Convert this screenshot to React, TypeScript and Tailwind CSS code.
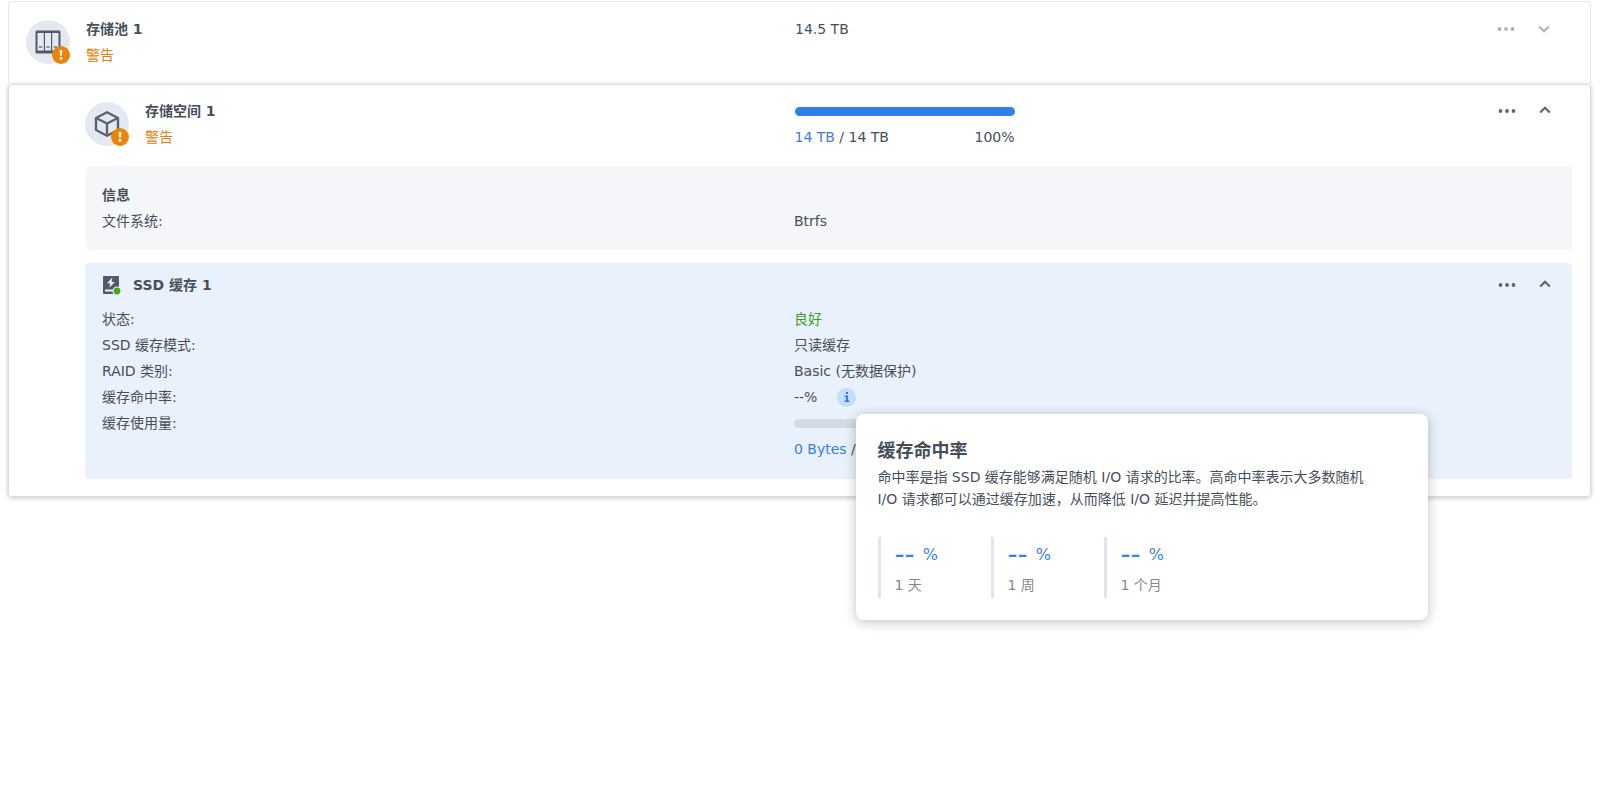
import React from 'react';

const cacheInfo = [
  { label: '状态:', value: '良好', className: 'text-[#3f9c1f]' },
  { label: 'SSD 缓存模式:', value: '只读缓存', className: '' },
  { label: 'RAID 类别:', value: 'Basic (无数据保护)', className: '' },
];

const hitRates = [
  { value: '--', label: '1 天' },
  { value: '--', label: '1 周' },
  { value: '--', label: '1 个月' },
];

const WarningBadge: React.FC = () => (
  <svg viewBox="0 0 18 18" className="absolute right-0 bottom-0 h-[18px] w-[18px]">
    <circle cx="9" cy="9" r="9" fill="#eb840b" />
    <path d="M7.6 4h2.8l-.5 5.8H8.1z" fill="#fff" />
    <circle cx="9" cy="12.3" r="1.4" fill="#fff" />
  </svg>
);

const PoolIcon: React.FC = () => (
  <svg viewBox="0 0 26 24" className="h-6 w-[26px]">
    <rect x="0.5" y="0.5" width="25" height="23" rx="1.5" fill="#505a68" />
    <path d="M2.5 3h6.3v17.5H2.5zM10 3h6v17.5h-6zM17.2 3h6.3v17.5h-6.3z" fill="#e4e9f1" />
    <path d="M4 17h3.2M11.4 17h3.2M18.8 17H22" stroke="#6b7481" strokeWidth="1.6" />
  </svg>
);

const VolumeIcon: React.FC = () => (
  <svg viewBox="0 0 26 26" className="h-[26px] w-[26px]" fill="none" stroke="#5a6370" strokeWidth="2.4" strokeLinejoin="round">
    <path d="M13 1.3 24 7v12l-11 5.7L2 19V7z" />
    <path d="M2 7l11 5.5L24 7M13 12.5v12" />
  </svg>
);

const CacheIcon: React.FC = () => (
  <svg viewBox="0 0 20 20" className="h-5 w-5">
    <path d="M2 1h14a1 1 0 0 1 1 1v16a1 1 0 0 1-1 1H2a1 1 0 0 1-1-1V2a1 1 0 0 1 1-1z" fill="#505a68" />
    <path d="M3 14.5h8.5v2H3z" fill="#e8f0fd" />
    <path d="M10.2 2.8 5 8.2h3.2l-.8 4.2L13 7H9.7z" fill="#e8f0fd" />
    <circle cx="15" cy="16" r="4.6" fill="#e8f0fd" />
    <circle cx="15" cy="16" r="3.4" fill="#43a816" />
  </svg>
);

const RowActions: React.FC<{ name: string; open?: boolean }> = ({ name, open }) => (
  <div className={`flex h-[26px] shrink-0 items-center gap-5 ${open ? 'text-[#5f6670]' : 'text-[#adb0b5]'}`}>
    <button type="button" aria-label={`${name} 更多`}>
      <svg viewBox="0 0 18 18" className="h-[18px] w-[18px]" fill="currentColor">
        <circle cx="2.5" cy="9" r="1.9" />
        <circle cx="9" cy="9" r="1.9" />
        <circle cx="15.5" cy="9" r="1.9" />
      </svg>
    </button>
    <button type="button" aria-label={`${name} 展开`} aria-expanded={!!open}>
      <svg viewBox="0 0 18 18" className="h-[18px] w-[18px]" fill="none" stroke="currentColor" strokeWidth="2.2">
        <path d={open ? 'M4.2 10.5 9 5.800l4.8 4.7' : 'M4.2 6.5 9 11.200l4.800-4.700'} />
      </svg>
    </button>
  </div>
);

const HitRatePopover: React.FC = () => (
  <div
    role="tooltip"
    className="absolute top-full left-full z-10 mt-[7px] w-[572px] rounded-lg bg-white px-[21px] pt-6 pb-[22px] shadow-[0_2px_12px_rgba(0,0,0,0.25)]"
  >
    <h3 className="text-lg leading-[26px] font-bold">缓存命中率</h3>
    <p className="mt-0.5 pr-6 leading-[22px]">
      命中率是指 SSD 缓存能够满足随机 I/O 请求的比率。高命中率表示大多数随机 I/O 请求都可以通过缓存加速，从而降低 I/O 延迟并提高性能。
    </p>
    <div className="mt-[27px] ml-px flex">
      {hitRates.map((rate) => (
        <div key={rate.label} className="w-[113px] border-l-3 border-[#dde5ef] pl-[13px]">
          <p className="flex h-9 items-center gap-2 text-base text-[#3b82e0]">
            <span className="text-[28px] leading-9">{rate.value}</span>%
          </p>
          <p className="leading-[25px] text-[#84898f]">{rate.label}</p>
        </div>
      ))}
    </div>
  </div>
);

const App: React.FC = () => {
  return (
    <main className="min-h-screen bg-white pt-px pr-[21px] pl-2 font-['DejaVu_Sans','Noto_Sans_CJK_SC',sans-serif] text-sm text-[#464f59]">
      {/* Storage pool */}
      <section className="flex h-[83px] rounded-t border border-b-0 border-[#e8e9eb] pt-[14px] pr-[37px]">
        <div className="flex w-[calc(50%+14px)] shrink-0 gap-4 pl-[17px]">
          <div className="relative mt-1 flex h-11 w-11 items-center justify-center rounded-full bg-[#e4e9f1]">
            <PoolIcon />
            <WarningBadge />
          </div>
          <div className="leading-[26px]">
            <h2 className="font-bold">存储池 1</h2>
            <p className="text-[#e3830f]">警告</p>
          </div>
        </div>
        <div className="flex-1 leading-[26px]">14.5 TB</div>
        <RowActions name="存储池 1" />
      </section>

      {/* Volume */}
      <section className="rounded border border-[#dcdde0] pt-[13px] pr-[18px] pb-[17px] pl-[76px] shadow-[0_1px_4px_rgba(0,0,0,0.25)]">
        <div className="flex pr-[18px]">
          <div className="flex w-[calc(50%-25px)] shrink-0 gap-4">
            <div className="relative mt-1 flex h-11 w-11 items-center justify-center rounded-full bg-[#e4e9f1]">
              <VolumeIcon />
              <WarningBadge />
            </div>
            <div className="leading-[26px]">
              <h2 className="font-bold">存储空间 1</h2>
              <p className="text-[#e3830f]">警告</p>
            </div>
          </div>
          <div className="flex-1">
            <div className="w-[220px]">
              <div className="mt-[9px] mb-2 h-[9px] rounded-full bg-[#2f80ed]" />
              <div className="flex justify-between leading-[26px]">
                <span>
                  <span className="text-[#3b7de0]">14 TB</span> / 14 TB
                </span>
                <span>100%</span>
              </div>
            </div>
          </div>
          <RowActions name="存储空间 1" open />
        </div>

        <div className="mt-4 rounded bg-[#f4f6fa] pt-4 pb-4 pl-[17px] leading-[26px]">
          <h3 className="font-bold">信息</h3>
          <dl className="flex">
            <dt className="w-[calc(50%-43px)]">文件系统:</dt>
            <dd>Btrfs</dd>
          </dl>
        </div>

        <div className="mt-[13px] rounded bg-[#e9f1fd] pt-[9px] pb-[17px] pl-[17px] leading-[26px]">
          <div className="mb-2 flex items-center justify-between pr-[18px]">
            <div className="flex items-center gap-[11px]">
              <CacheIcon />
              <h3 className="font-bold">SSD 缓存 1</h3>
            </div>
            <RowActions name="SSD 缓存 1" open />
          </div>
          <dl>
            {cacheInfo.map((row) => (
              <div key={row.label} className="flex">
                <dt className="w-[calc(50%-43px)]">{row.label}</dt>
                <dd className={row.className}>{row.value}</dd>
              </div>
            ))}
            <div className="flex">
              <dt className="w-[calc(50%-43px)]">缓存命中率:</dt>
              <dd className="flex items-center gap-5">
                --%
                <div className="relative h-[19px] w-[19px]">
                  <button
                    type="button"
                    aria-label="缓存命中率说明"
                    className="flex h-[19px] w-[19px] items-center justify-center rounded-full bg-[#c5dcfb] text-[#2f7bea]"
                  >
                    <svg viewBox="0 0 8 10" className="h-[10px] w-2" fill="currentColor">
                      <path d="M3 0h2v2H3zM1.5 3.5H5v5h1.500V10h-5V8.500H3V5H1.500z" />
                    </svg>
                  </button>
                  <HitRatePopover />
                </div>
              </dd>
            </div>
            <div className="flex">
              <dt className="w-[calc(50%-43px)]">缓存使用量:</dt>
              <dd>
                <div className="mt-[9px] mb-2 h-[9px] w-[220px] rounded-full bg-[#d5dbe6]" />
                <span className="text-[#3b7de0]">0 Bytes</span> /
              </dd>
            </div>
          </dl>
        </div>
      </section>
    </main>
  );
};

export default App;
